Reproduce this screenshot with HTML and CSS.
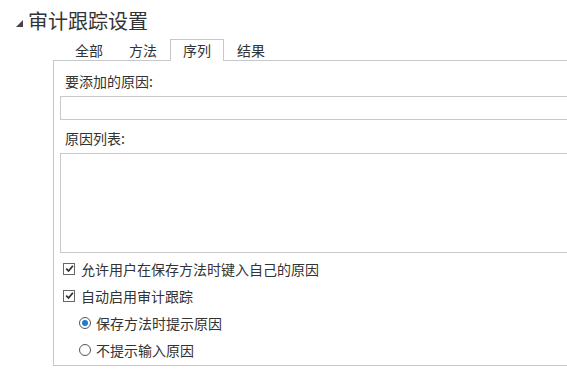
FILE: index.html
```html
<!DOCTYPE html>
<html lang="zh-CN">
<head>
    <meta charset="UTF-8">
    <title>审计跟踪设置</title>
    <link rel="stylesheet" href="styles.css">
</head>
<body>

<!-- 标题 -->
<div class="header">
    <span class="arrow"></span>
    <h1>审计跟踪设置</h1>
</div>

<!-- 选项卡 -->
<div class="tabs">
    <div class="tab">全部</div>
    <div class="tab">方法</div>
    <div class="tab active">序列</div>
    <div class="tab">结果</div>
</div>

<div class="panel">
    <div class="label">要添加的原因:</div>
    <div class="field"></div>

    <div class="label label-list">原因列表:</div>
    <div class="field list"></div>

    <div class="row check-row first">
        <span class="checkbox">
            <svg width="9" height="9" viewBox="0 0 9 9"><path d="M1.2 4.6 L3.6 7 L7.9 1.8" fill="none" stroke="#333" stroke-width="1.8"/></svg>
        </span>
        允许用户在保存方法时键入自己的原因
    </div>
    <div class="row check-row">
        <span class="checkbox">
            <svg width="9" height="9" viewBox="0 0 9 9"><path d="M1.2 4.6 L3.6 7 L7.9 1.8" fill="none" stroke="#333" stroke-width="1.8"/></svg>
        </span>
        自动启用审计跟踪
    </div>
    <div class="row radio-row">
        <span class="radio checked"></span>
        保存方法时提示原因
    </div>
    <div class="row radio-row">
        <span class="radio"></span>
        不提示输入原因
    </div>
</div>

</body>
</html>
```

FILE: styles.css
```css
html, body {
    margin: 0;
}
body {
    font-family: "Noto Sans CJK SC", "Microsoft YaHei", sans-serif;
    font-size: 14px;
    color: #333;
    background: #fff;
}
.header {
    display: flex;
    align-items: center;
    padding: 7px 0 0 16px;
}
.arrow {
    width: 0;
    height: 0;
    border-left: 7px solid transparent;
    border-bottom: 7px solid #444;
    margin: 5px 5px 0 0;
}
h1 {
    margin: 0;
    font-size: 20px;
    font-weight: normal;
    line-height: 28px;
    color: #333;
}
.tabs {
    display: flex;
    margin: 4px 0 0 62px;
}
.tab {
    padding: 0 12px;
    line-height: 20px;
    border: 1px solid transparent;
    border-bottom: none;
    position: relative;
    z-index: 1;
}
.tab.active {
    border-color: #c5c9cc;
    background: #fff;
    margin-bottom: -1px;
    padding-bottom: 1px;
}
/* 右侧超出窗口，不画右边框 */
.panel {
    margin-left: 53px;
    border: 1px solid #c5c9cc;
    border-right: none;
    padding: 10px 0 2px 6px;
}
.label {
    line-height: 20px;
    margin-left: 5px;
}
.label-list {
    margin-top: 8px;
}
.field {
    height: 22px;
    border: 1px solid #c5c9cc;
    border-right: none;
    margin-top: 5px;
}
.field.list {
    height: 98px;
}
.row {
    display: flex;
    align-items: center;
    height: 27px;
}
.row.first {
    margin-top: 2px;
}
.check-row {
    padding-left: 3px;
}
.checkbox {
    width: 10px;
    height: 10px;
    border: 1px solid #666;
    margin-right: 6px;
    display: flex;
    align-items: center;
    justify-content: center;
}
.radio-row {
    padding-left: 19px;
}
.radio {
    width: 10px;
    height: 10px;
    border: 1px solid #555;
    border-radius: 50%;
    margin-right: 5px;
    display: flex;
    align-items: center;
    justify-content: center;
}
.radio.checked::after {
    content: "";
    width: 6px;
    height: 6px;
    border-radius: 50%;
    background: #1b7bd6;
}
```
